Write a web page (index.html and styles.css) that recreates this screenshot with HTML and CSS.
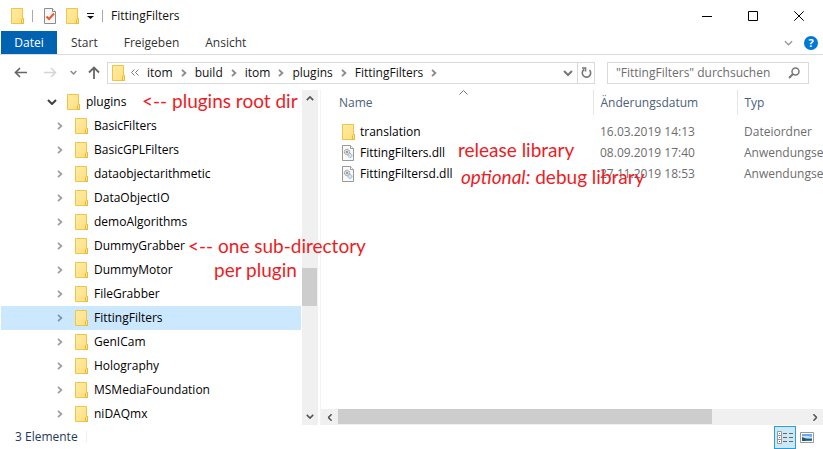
FILE: index.html
```html
<!DOCTYPE html>
<html lang="de">
<head>
<meta charset="utf-8">
<title>FittingFilters</title>
<link rel="stylesheet" href="styles.css">
</head>
<body>
<svg class="defs" aria-hidden="true">
  <defs>
    <linearGradient id="fold" x1="0" y1="0" x2="1" y2="1"><stop offset="0" stop-color="#ffeba6"/><stop offset="1" stop-color="#ffdf7c"/></linearGradient>
    <symbol id="folder" viewBox="0 0 13 16"><path d="M.5.5h11v10h1v5H.5z" fill="url(#fold)" stroke="#eec544"/><path d="M10.5 15.5v-4l1-1h1v5z" fill="#ffe492" stroke="#e6b93a"/></symbol>
    <symbol id="chev" viewBox="0 0 6 8"><path d="M1 .8 4.4 4 1 7.200" fill="none" stroke="currentColor" stroke-width="1.800"/></symbol>
    <symbol id="down" viewBox="0 0 10 6"><path d="M1 1l4 4 4-4" fill="none" stroke="currentColor" stroke-width="2"/></symbol>
    <symbol id="dll" viewBox="0 0 12 16"><path d="M.5.5h8l3 3v12H.5z" fill="#fafafa" stroke="#999"/><path d="M8.500.5v3h3" fill="#fff" stroke="#999"/><circle cx="5" cy="7" r="2.700" fill="#ddd" stroke="#888" stroke-dasharray="1.200 .6"/><circle cx="5" cy="7" r="1" fill="#888"/><circle cx="8" cy="10.500" r="2" fill="#cfe4f3" stroke="#8fafc8" stroke-dasharray="1.200 .5"/></symbol>
  </defs>
</svg>
<div class="window">
  <header class="titlebar">
    <svg class="folder"><use href="#folder"/></svg>
    <span class="sep"></span>
    <button class="quick" aria-label="Eigenschaften"><svg width="12" height="16" viewBox="0 0 12 16"><path d="M.5.5h8l3 3v12H.5z" fill="#f7f7f7" stroke="#8c8c8c"/><path d="M8.500.5v3h3" fill="#fff" stroke="#8c8c8c"/><path d="M2.500 8.500l2.500 2.500 5-5.500" fill="none" stroke="#f0582a" stroke-width="2"/></svg></button>
    <button class="quick" aria-label="Neuer Ordner"><svg class="folder"><use href="#folder"/></svg></button>
    <button class="quick" aria-label="Symbolleiste anpassen"><svg width="7" height="6" viewBox="0 0 7 6"><path d="M0 0h7v1H0zM0 3h7L3.500 6z" fill="#111"/></svg></button>
    <span class="sep"></span>
    <h1>FittingFilters</h1>
    <div class="controls">
      <button aria-label="Minimieren"><svg viewBox="0 0 10 10"><path d="M0 5.500h10"/></svg></button>
      <button aria-label="Maximieren"><svg viewBox="0 0 10 10"><path d="M.5.5h9v9h-9z"/></svg></button>
      <button aria-label="Schließen"><svg viewBox="0 0 10 10"><path d="M.3.3l9.400 9.400M9.700.3.3 9.700"/></svg></button>
    </div>
  </header>
  <nav class="ribbon">
    <button class="file">Datei</button>
    <button>Start</button>
    <button>Freigeben</button>
    <button>Ansicht</button>
    <div class="ribbon-end">
      <button aria-label="Menüband erweitern"><svg width="9" height="6" viewBox="0 0 10 6"><path d="M1 1l4 4 4-4" fill="none" stroke="#999" stroke-width="1.500"/></svg></button>
      <button class="help" aria-label="Hilfe">?</button>
    </div>
  </nav>
  <div class="address">
    <div class="history">
      <button aria-label="Zurück"><svg width="13" height="11" viewBox="0 0 13 11"><path d="M6 1L1.500 5.500 6 10M2 5.500h11" fill="none" stroke="#666" stroke-width="1.700"/></svg></button>
      <button aria-label="Vorwärts"><svg width="13" height="11" viewBox="0 0 13 11"><path d="M7 1l4.500 4.500L7 10M11 5.500H0" fill="none" stroke="#d5d5d5" stroke-width="1.500"/></svg></button>
      <button aria-label="Verlauf"><svg width="7" height="5" viewBox="0 0 10 6"><path d="M1 1l4 4 4-4" fill="none" stroke="#888" stroke-width="2"/></svg></button>
      <button aria-label="Nach oben"><svg width="12" height="13" viewBox="0 0 12 13"><path d="M1 6.500l5-5 5 5M6 2v11" fill="none" stroke="#666" stroke-width="1.800"/></svg></button>
    </div>
    <div class="path">
      <svg class="folder"><use href="#folder"/></svg>
      <svg class="more" viewBox="0 0 8 7"><path d="M3.500.5l-3 3 3 3M7.500.5l-3 3 3 3" fill="none" stroke="#777"/></svg>
      <a href="#">itom</a><svg class="chev"><use href="#chev"/></svg>
      <a href="#">build</a><svg class="chev"><use href="#chev"/></svg>
      <a href="#">itom</a><svg class="chev"><use href="#chev"/></svg>
      <a href="#">plugins</a><svg class="chev"><use href="#chev"/></svg>
      <a href="#">FittingFilters</a><svg class="chev"><use href="#chev"/></svg>
      <button class="drop" aria-label="Vorherige Orte"><svg width="10" height="6"><use href="#down"/></svg></button>
      <button class="reload" aria-label="Aktualisieren"><svg width="11" height="12" viewBox="0 0 11 12"><path d="M3 2.500A4.200 4.200 0 1 0 8.500 3M1 1h3.500v3.500" fill="none" stroke="#777" stroke-width="1.600"/></svg></button>
    </div>
    <div class="search">
      <input type="text" aria-label="Suche" placeholder="&quot;FittingFilters&quot; durchsuchen">
      <svg width="12" height="12" viewBox="0 0 12 12"><circle cx="7.500" cy="4.500" r="3.500" fill="none" stroke="#777" stroke-width="1.500"/><path d="M5 7L1 11" stroke="#777" stroke-width="2"/></svg>
    </div>
  </div>
  <main class="content">
    <ul class="tree">
      <li class="root"><svg class="open"><use href="#down"/></svg><svg class="folder"><use href="#folder"/></svg><a href="#">plugins</a></li>
      <li><svg class="chev"><use href="#chev"/></svg><svg class="folder"><use href="#folder"/></svg><a href="#">BasicFilters</a></li>
      <li><svg class="chev"><use href="#chev"/></svg><svg class="folder"><use href="#folder"/></svg><a href="#">BasicGPLFilters</a></li>
      <li><svg class="chev"><use href="#chev"/></svg><svg class="folder"><use href="#folder"/></svg><a href="#">dataobjectarithmetic</a></li>
      <li><svg class="chev"><use href="#chev"/></svg><svg class="folder"><use href="#folder"/></svg><a href="#">DataObjectIO</a></li>
      <li><svg class="chev"><use href="#chev"/></svg><svg class="folder"><use href="#folder"/></svg><a href="#">demoAlgorithms</a></li>
      <li><svg class="chev"><use href="#chev"/></svg><svg class="folder"><use href="#folder"/></svg><a href="#">DummyGrabber</a></li>
      <li><svg class="chev"><use href="#chev"/></svg><svg class="folder"><use href="#folder"/></svg><a href="#">DummyMotor</a></li>
      <li><svg class="chev"><use href="#chev"/></svg><svg class="folder"><use href="#folder"/></svg><a href="#">FileGrabber</a></li>
      <li class="selected"><svg class="chev"><use href="#chev"/></svg><svg class="folder"><use href="#folder"/></svg><a href="#">FittingFilters</a></li>
      <li><svg class="chev"><use href="#chev"/></svg><svg class="folder"><use href="#folder"/></svg><a href="#">GenICam</a></li>
      <li><svg class="chev"><use href="#chev"/></svg><svg class="folder"><use href="#folder"/></svg><a href="#">Holography</a></li>
      <li><svg class="chev"><use href="#chev"/></svg><svg class="folder"><use href="#folder"/></svg><a href="#">MSMediaFoundation</a></li>
      <li><svg class="chev"><use href="#chev"/></svg><svg class="folder"><use href="#folder"/></svg><a href="#">niDAQmx</a></li>
    </ul>
    <div class="vscroll">
      <button aria-label="Nach oben blättern"><svg class="arrow up"><use href="#down"/></svg></button>
      <div class="track"><div class="thumb"></div></div>
      <button aria-label="Nach unten blättern"><svg class="arrow"><use href="#down"/></svg></button>
    </div>
    <section class="files">
      <svg class="sort" viewBox="0 0 9 5"><path d="M.5 4.500l4-4 4 4" fill="none" stroke="#777"/></svg>
      <div class="table-wrap">
        <table>
          <thead><tr><th class="name">Name</th><th class="date">Änderungsdatum</th><th>Typ</th></tr></thead>
          <tbody>
            <tr><td><div class="entry"><svg class="folder"><use href="#folder"/></svg>translation</div></td><td>16.03.2019 14:13</td><td>Dateiordner</td></tr>
            <tr><td><div class="entry"><svg class="dll"><use href="#dll"/></svg>FittingFilters.dll</div></td><td>08.09.2019 17:40</td><td>Anwendungserweiterung</td></tr>
            <tr><td><div class="entry"><svg class="dll"><use href="#dll"/></svg>FittingFiltersd.dll</div></td><td>27.11.2019 18:53</td><td>Anwendungserweiterung</td></tr>
          </tbody>
        </table>
      </div>
      <div class="hscroll">
        <button aria-label="Nach links blättern"><svg class="arrow left"><use href="#down"/></svg></button>
        <div class="track"><div class="thumb"></div></div>
        <button aria-label="Nach rechts blättern"><svg class="arrow right"><use href="#down"/></svg></button>
      </div>
    </section>
    <p class="note note-root">&lt;-- plugins root dir</p>
    <p class="note note-sub">&lt;-- one sub-directory</p>
    <p class="note note-per">per plugin</p>
    <p class="note note-release">release library</p>
    <p class="note note-debug"><em>optional:</em> debug library</p>
  </main>
  <footer class="status">
    <span>3 Elemente</span>
    <div class="views">
      <button class="active" aria-label="Details"><svg width="16" height="13" viewBox="0 0 16 13"><path d="M.5.5h4v12h-4zM.5 4.500h4M.5 8.500h4" fill="#fff" stroke="#999"/><path d="M6 2.500h4m2 0h4M6 6.500h4m2 0h4M6 10.500h4m2 0h4" stroke="#666"/><path d="M2 2h1v1H2z" fill="#396"/><path d="M2 6h1v1H2z" fill="#36e"/><path d="M2 10h1v1H2z" fill="#d11"/></svg></button>
      <button aria-label="Große Symbole"><svg width="14" height="11" viewBox="0 0 14 11"><path d="M.5.5h13v10H.5z" fill="#fff" stroke="#999"/><path d="M2 2h10v7H2z" fill="#6ba8f0"/><path d="M2 4h6l4 1v1H2z" fill="#c8e2fa"/><path d="M2 5l5 2h5v2H2z" fill="#285a62"/><path d="M6 8h6v1H6z" fill="#3775c4"/></svg></button>
    </div>
  </footer>
</div>
</body>
</html>
```
FILE: styles.css
```css
* { box-sizing: border-box; }
body { margin: 0; background: #fff; color: #111; font: 12px/16px "Open Sans", "Noto Sans", sans-serif; }
button { border: 0; padding: 0; margin: 0; background: none; font: inherit; color: inherit; display: flex; align-items: center; justify-content: center; }
a { color: inherit; text-decoration: none; }
svg { display: block; flex: none; }
.defs { position: absolute; width: 0; height: 0; }
.window { display: flex; flex-direction: column; height: 100vh; overflow: hidden; }
.folder { width: 13px; height: 16px; }
.chev { width: 6px; height: 8px; color: #888; }

.titlebar { display: flex; align-items: center; height: 31px; padding: 0 1px 0 11px; flex: none; }
.titlebar h1 { margin: 0 0 0 8px; font-size: 12px; font-weight: 400; }
.sep { width: 1px; height: 12px; background: #aaa; margin-left: 8px; }
.quick { margin-left: 11px; }
.quick + .quick { margin-left: 10px; }
.quick + .quick + .quick { margin-left: 8px; }
.controls { display: flex; margin-left: auto; }
.controls button { width: 46px; height: 30px; }
.controls svg { width: 10px; height: 10px; fill: none; stroke: #000; }

.ribbon { display: flex; height: 24px; flex: none; padding-left: 1px; border-bottom: 1px solid #dadbdc; color: #333; }
.ribbon > button { padding: 0 13px; }
.ribbon > .file { width: 56px; background: #0063b1; color: #fff; }
.ribbon > .file + button { padding-left: 14px; }
.ribbon-end { display: flex; align-items: center; gap: 11px; margin-left: auto; padding-right: 5px; }
.help { width: 14px; height: 14px; border-radius: 50%; background: #0078d7; color: #fff; font-weight: 700; font-size: 11px; }

.address { display: flex; align-items: center; height: 35px; padding-right: 14px; flex: none; }
.history { display: flex; align-items: center; width: 107px; padding-left: 14px; gap: 17px; flex: none; }
.history button:nth-child(3) { margin-left: -4px; }
.history button:nth-child(4) { margin-left: -6px; }
.path { display: flex; align-items: center; height: 22px; flex: 1; min-width: 0; border: 1px solid #d9d9d9; padding-left: 4px; }
.path a { margin: 0 8px; white-space: nowrap; }
.more { width: 8px; height: 7px; margin-left: 6px; }
.drop { width: 18px; margin-left: auto; color: #777; }
.reload { width: 17px; align-self: stretch; border-left: 1px solid #d9d9d9; }
.search { display: flex; align-items: center; width: 202px; height: 22px; margin-left: 12px; padding: 0 8px; border: 1px solid #d9d9d9; flex: none; }
.search input { flex: 1; min-width: 0; border: 0; padding: 0; font: inherit; outline: 0; background: none; }
.search input::placeholder { color: #6d6d6d; opacity: 1; }

.content { position: relative; display: flex; flex: 1; min-height: 0; }
.tree { list-style: none; margin: 0; padding: 0 0 0 1px; width: 301px; flex: none; overflow: hidden; }
.tree li { display: flex; align-items: center; height: 24px; padding-left: 56px; }
.tree .root { padding-left: 46px; }
.tree .chev { margin-right: 12px; color: #a0a0a0; }
.tree .selected { background: #cce8ff; }
.tree .selected .chev { color: #8297a8; }
.tree .open { width: 10px; height: 6px; margin-right: 10px; color: #404040; }
.tree a { margin-left: 6px; color: #000; }
.vscroll { display: flex; flex-direction: column; width: 16px; margin-left: 1px; background: #f0f0f0; flex: none; }
.vscroll button { width: 15px; height: 17px; }
.track { flex: 1; display: flex; }
.thumb { background: #cdcdcd; }
.vscroll .track { align-items: flex-end; padding-bottom: 102px; }
.vscroll .thumb { width: 15px; height: 38px; }
.arrow { width: 8px; height: 5px; color: #555; }
.up { transform: rotate(180deg); }
.left { transform: rotate(90deg); }
.right { transform: rotate(-90deg); }

.files { position: relative; display: flex; flex-direction: column; flex: 1; min-width: 0; margin-left: 2px; border-left: 1px solid #f3f3f3; }
.sort { position: absolute; left: 138px; top: 0; width: 9px; height: 5px; }
.table-wrap { flex: 1; overflow: hidden; }
table { border-collapse: collapse; table-layout: fixed; width: 560px; }
th { height: 25px; padding: 0 0 0 7px; font-weight: 400; text-align: left; color: #4c607a; border-right: 1px solid #e5e5e5; }
.name { width: 272px; padding-left: 18px; }
.date { width: 144px; }
td { height: 21px; padding: 0 0 0 7px; color: #6d6d6d; white-space: nowrap; }
tbody::before { content: ""; display: block; height: 6px; }
.entry { display: flex; align-items: center; color: #000; padding-left: 14px; }
.entry .folder { margin-right: 5px; }
.dll { width: 12px; height: 16px; margin-right: 6px; }
.hscroll { display: flex; height: 16px; background: #f0f0f0; }
.hscroll button { width: 17px; }
.hscroll .thumb { width: 80%; height: 15px; }

.note { position: absolute; margin: 0; font: 19px/24px Lato, sans-serif; color: #ed1c24; white-space: nowrap; }
.note-root { left: 142px; top: -1px; }
.note-sub { left: 188px; top: 144px; }
.note-per { left: 214px; top: 168px; }
.note-release { left: 458px; top: 48px; }
.note-debug { left: 461px; top: 75px; }

.status { display: flex; height: 24px; flex: none; align-items: center; padding-left: 15px; color: #1e395b; }
.status > span { padding-right: 8px; border-right: 1px solid #f0f0f0; line-height: 12px; }
.views { display: flex; margin-left: auto; padding-right: 9px; gap: 4px; }
.views button { height: 23px; }
.views .active { width: 22px; background: #cce8f6; border: 1px solid #26a0da; }
```
